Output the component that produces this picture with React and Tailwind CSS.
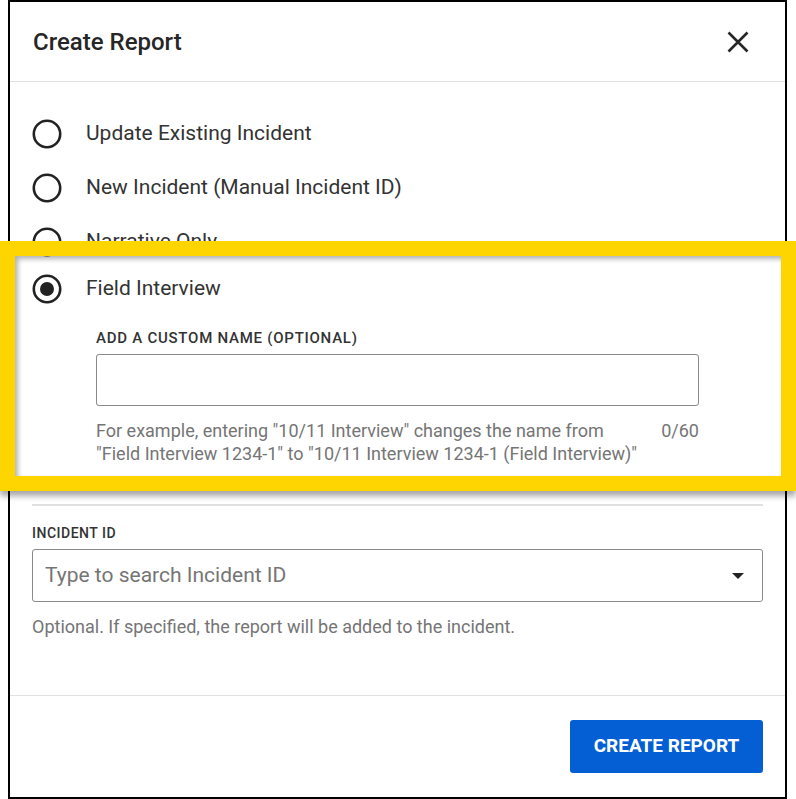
import { useState } from "react";

const options = [
  "Update Existing Incident",
  "New Incident (Manual Incident ID)",
  "Narrative Only",
  "Field Interview",
];

const Radio = ({ checked }) => (
  <svg width="30" height="30" viewBox="0 0 30 30" className="shrink-0">
    <circle cx="15" cy="15" r="13.2" fill="none" stroke="#222" strokeWidth="2.6" />
    {checked && <circle cx="15" cy="15" r="7" fill="#222" />}
  </svg>
);

const CreateReport = () => {
  const [selected, setSelected] = useState(3);
  const [name, setName] = useState("");

  return (
    <div className="relative w-[796px] h-[799px] bg-white font-['Roboto',sans-serif] text-[#212121]">
      <div className="ml-[8px] w-[779px] h-[799px] border-2 border-black flex flex-col">
        {/* header */}
        <div className="h-[80px] shrink-0 flex items-center justify-between pl-[23px] pr-[36px] border-b border-[#e0e0e0]">
          <h1 className="text-[24px] font-medium text-[#262626]">Create Report</h1>
          <svg width="22" height="22" viewBox="0 0 22 22">
            <path d="M1.5 1.5 L20.5 20.5 M20.5 1.5 L1.5 20.5" stroke="#262626" strokeWidth="2.6" />
          </svg>
        </div>

        {/* body */}
        <div className="flex-1 px-[22px] pt-[25px] border-b border-[#e0e0e0]">
          {options.map((opt, i) => (
            <div
              key={opt}
              onClick={() => setSelected(i)}
              className={
                i === 2
                  ? "h-[54px] -mb-[7px] flex items-center gap-6 cursor-pointer"
                  : "h-[54px] flex items-center gap-6 cursor-pointer"
              }
            >
              <Radio checked={selected === i} />
              <span className="text-[21px] text-[#333]">{opt}</span>
            </div>
          ))}

          <div className="pl-[64px] w-[667px]">
            <label className="block mt-[12px] text-[15px] leading-5 font-medium tracking-[0.75px] text-[#333]">
              ADD A CUSTOM NAME (OPTIONAL)
            </label>
            <input
              value={name}
              maxLength={60}
              onChange={(e) => setName(e.target.value)}
              className="block mt-[6px] w-full h-[52px] border border-[#8a8a8a] rounded-[3px] px-3 text-[18px] outline-none"
            />
            <div className="mt-[13px] flex justify-between text-[18px] leading-[23px] text-[#757575]">
              <p>
                For example, entering "10/11 Interview" changes the name from
                <br />
                "Field Interview 1234-1" to "10/11 Interview 1234-1 (Field Interview)"
              </p>
              <span>{name.length}/60</span>
            </div>
          </div>

          <div className="mt-[39px] h-[2px] bg-[#e0e0e0]" />

          <label className="block mt-[17px] text-[14px] leading-5 font-medium tracking-[0.5px] text-[#333]">
            INCIDENT ID
          </label>
          <div className="mt-[6px] h-[53px] border border-[#8a8a8a] rounded-[3px] flex items-center justify-between pl-[12px] pr-[18px]">
            <span className="text-[21px] text-[#757575]">Type to search Incident ID</span>
            <svg width="12" height="6" viewBox="0 0 12 6">
              <path d="M0 0 L12 0 L6 6 Z" fill="#222" />
            </svg>
          </div>
          <p className="mt-[13px] text-[18px] leading-[23px] text-[#757575]">
            Optional. If specified, the report will be added to the incident.
          </p>
        </div>

        {/* footer */}
        <div className="shrink-0 flex justify-end px-[22px] py-6">
          <button className="w-[193px] h-[53px] rounded-[3px] bg-[#055fd4] text-white text-[19px] font-bold">
            CREATE REPORT
          </button>
        </div>
      </div>

      {/* highlight annotation */}
      <div className="absolute left-0 top-[241px] w-[796px] h-[250px] border-[15px] border-[#ffd500] shadow-[0_5px_6px_rgba(0,0,0,0.35)] pointer-events-none">
        <div className="w-full h-full shadow-[inset_3px_3px_5px_rgba(0,0,0,0.3)]" />
      </div>
    </div>
  );
};

export default function App() {
  return <CreateReport />;
}
